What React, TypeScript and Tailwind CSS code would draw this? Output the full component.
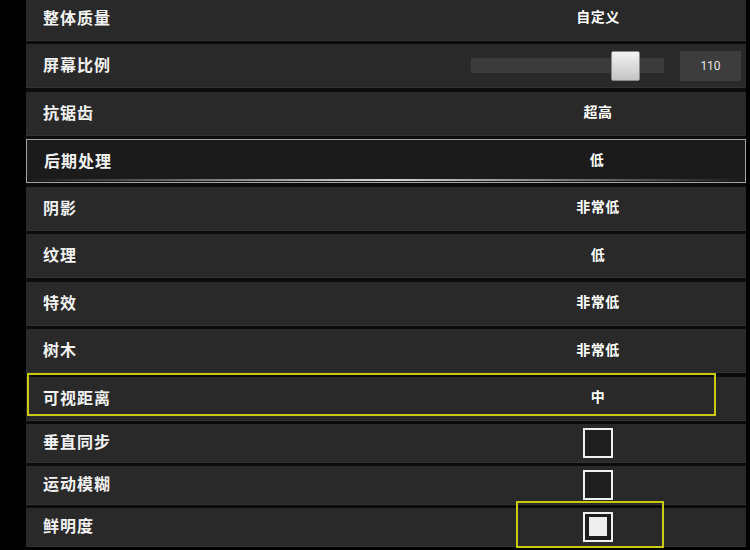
import React from "react";

const font = { fontFamily: '"Noto Sans CJK SC", "Noto Sans", sans-serif' };

type Row =
  | { label: string; kind: "text"; value: string }
  | { label: string; kind: "slider"; value: number }
  | { label: string; kind: "check"; checked: boolean };

const topRows: Row[] = [
  { label: "整体质量", kind: "text", value: "自定义" },
  { label: "屏幕比例", kind: "slider", value: 110 },
  { label: "抗锯齿", kind: "text", value: "超高" },
  { label: "后期处理", kind: "text", value: "低" },
  { label: "阴影", kind: "text", value: "非常低" },
  { label: "纹理", kind: "text", value: "低" },
  { label: "特效", kind: "text", value: "非常低" },
  { label: "树木", kind: "text", value: "非常低" },
  { label: "可视距离", kind: "text", value: "中" },
];

const checkRows: Row[] = [
  { label: "垂直同步", kind: "check", checked: false },
  { label: "运动模糊", kind: "check", checked: false },
  { label: "鲜明度", kind: "check", checked: true },
];

function Label({ text }: { text: string }) {
  return (
    <div className="flex-1 pl-[17px] pb-[3px] text-[16px] font-bold tracking-[1px] text-[#f2f2f2]">
      {text}
    </div>
  );
}

function Checkbox({ checked }: { checked: boolean }) {
  return (
    <div className="w-[30px] h-[30px] border-2 border-[#f0f0f0] bg-[#1e1e1e] flex items-center justify-center">
      {checked && <div className="w-[18px] h-[19px] bg-[#eeeeee]" />}
    </div>
  );
}

function SettingRow({ row }: { row: Row }) {
  const selected = row.label === "后期处理";
  const focused = row.label === "可视距离";
  const checkFocus = row.label === "鲜明度";
  const tall = row.kind !== "check";

  return (
    <div
      className={`relative flex items-center ${tall ? "h-[44px]" : "h-[38.5px]"} ${
        selected ? "bg-[#1b1b1b] border border-[#a3a3a3]" : "bg-[#292929] border-b border-[#333333]"
      }`}
    >
      <Label text={row.label} />

      {row.kind === "text" && (
        <div className="w-[144px] mr-[76px] pb-[3px] text-center text-[14px] font-bold tracking-[0.5px] text-white">
          {row.value}
        </div>
      )}

      {row.kind === "slider" && (
        <div className="flex items-center mr-[5px]">
          <div className="relative w-[193px] h-[15px] bg-[#3b3b3b]">
            <div className="absolute left-[140px] top-[-7px] w-[29px] h-[30px] rounded-[2px] border border-[#8a8a8a] bg-gradient-to-b from-[#f4f4f4] to-[#c4c4c4]" />
          </div>
          <div
            className="ml-[16px] w-[61px] h-[30px] bg-[#3d3d3d] flex items-center justify-center text-[12px] text-[#e6e6e6]"
            style={{ fontFamily: "Roboto, sans-serif" }}
          >
            {row.value}
          </div>
        </div>
      )}

      {row.kind === "check" && (
        <div className="w-[144px] mr-[76px] flex justify-center">
          <Checkbox checked={row.checked} />
        </div>
      )}

      {selected && (
        <div className="absolute left-0 right-0 bottom-[1px] h-[2px] bg-gradient-to-r from-transparent via-[#d8d8d8] to-transparent" />
      )}
      {focused && (
        <div className="absolute left-[1px] top-[-3.5px] w-[689px] h-[43px] border-2 border-[#c9c90e]" />
      )}
      {checkFocus && (
        <div className="absolute left-[490px] top-[-7px] w-[148px] h-[47px] border-2 border-[#c9c90e]" />
      )}
    </div>
  );
}

export default function App() {
  return (
    <div className="w-[750px] h-[550px] bg-black overflow-hidden" style={font}>
      <div className="ml-[26px] w-[720px] mt-[-3.5px] flex flex-col gap-[3.5px] bg-[#0c0c0c]">
        {[...topRows, ...checkRows].map((r) => (
          <SettingRow key={r.label} row={r} />
        ))}
      </div>
    </div>
  );
}
